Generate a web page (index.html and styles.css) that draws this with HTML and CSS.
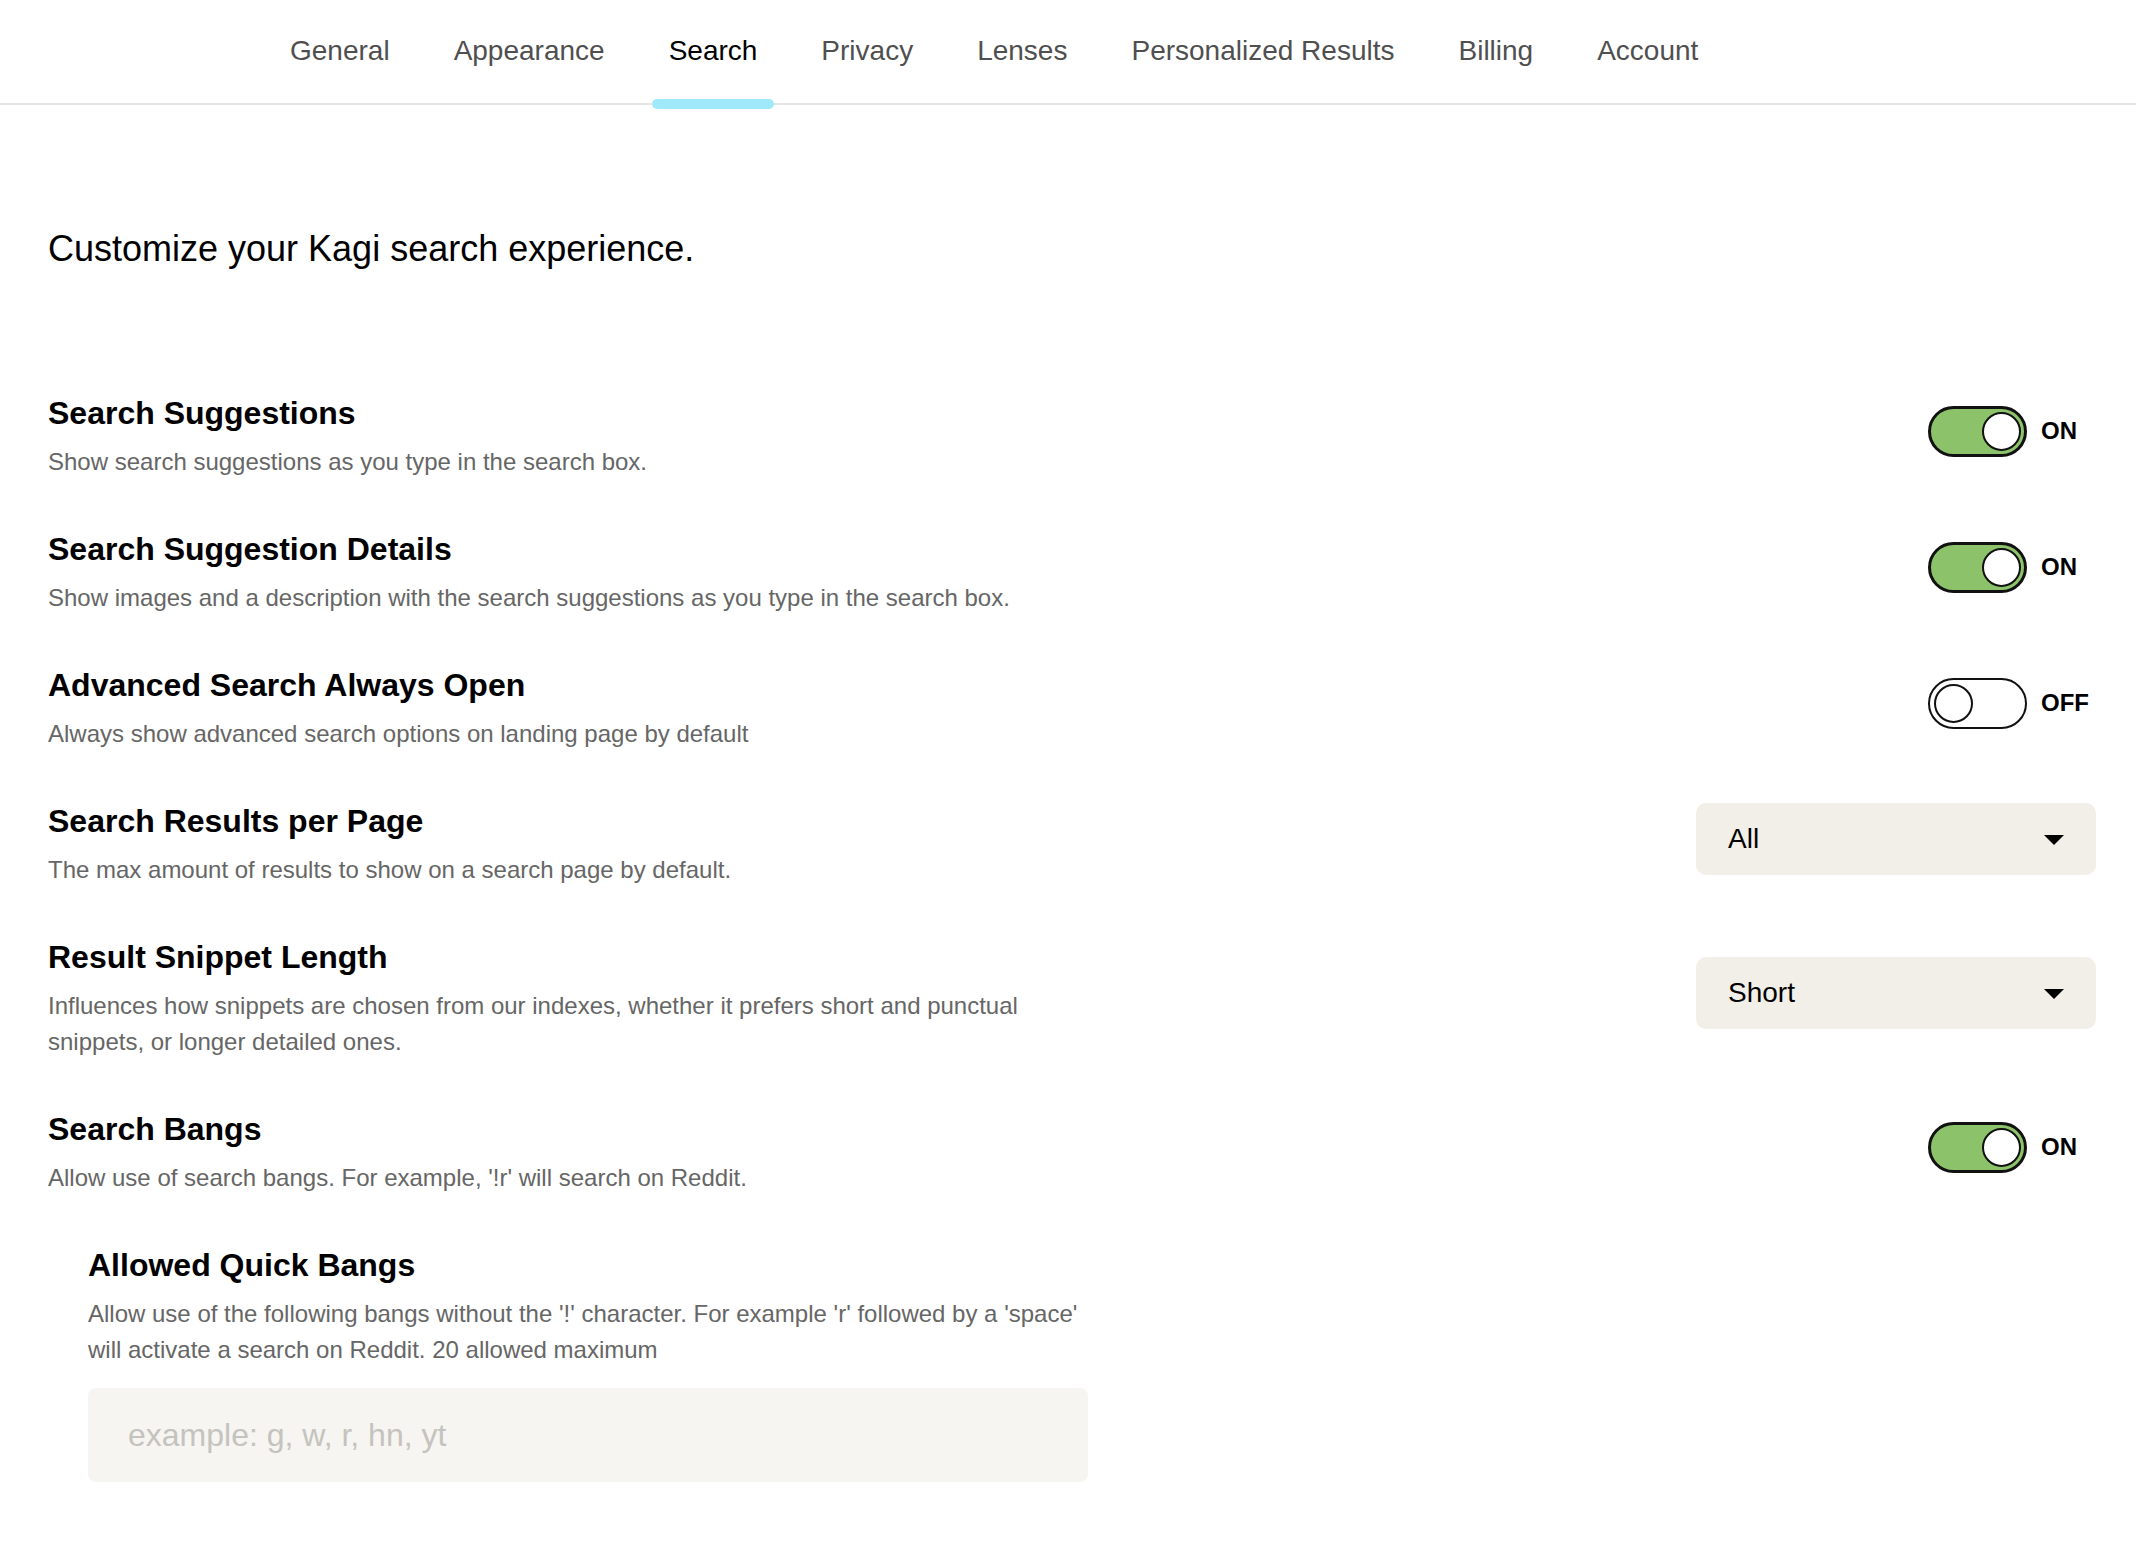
FILE: index.html
```html
<!DOCTYPE html>
<html lang="en">
<head>
<meta charset="utf-8">
<title>Search Settings</title>
<link rel="stylesheet" href="styles.css">
</head>
<body>
<nav class="tabs">
  <a class="tab">General</a>
  <a class="tab">Appearance</a>
  <a class="tab active">Search</a>
  <a class="tab">Privacy</a>
  <a class="tab">Lenses</a>
  <a class="tab">Personalized Results</a>
  <a class="tab">Billing</a>
  <a class="tab">Account</a>
</nav>
<main class="page">
  <h1 class="intro">Customize your Kagi search experience.</h1>

  <section class="setting">
    <div class="info">
      <h2 class="title">Search Suggestions</h2>
      <p class="desc">Show search suggestions as you type in the search box.</p>
    </div>
    <div class="control">
      <div class="switch-group">
        <span class="switch on"><span class="knob"></span></span>
        <span class="switch-label">ON</span>
      </div>
    </div>
  </section>

  <section class="setting">
    <div class="info">
      <h2 class="title">Search Suggestion Details</h2>
      <p class="desc">Show images and a description with the search suggestions as you type in the search box.</p>
    </div>
    <div class="control">
      <div class="switch-group">
        <span class="switch on"><span class="knob"></span></span>
        <span class="switch-label">ON</span>
      </div>
    </div>
  </section>

  <section class="setting">
    <div class="info">
      <h2 class="title">Advanced Search Always Open</h2>
      <p class="desc">Always show advanced search options on landing page by default</p>
    </div>
    <div class="control">
      <div class="switch-group">
        <span class="switch off"><span class="knob"></span></span>
        <span class="switch-label">OFF</span>
      </div>
    </div>
  </section>

  <section class="setting">
    <div class="info">
      <h2 class="title">Search Results per Page</h2>
      <p class="desc">The max amount of results to show on a search page by default.</p>
    </div>
    <div class="control">
      <div class="select">
        <span class="select-value">All</span>
        <span class="caret"></span>
      </div>
    </div>
  </section>

  <section class="setting">
    <div class="info">
      <h2 class="title">Result Snippet Length</h2>
      <p class="desc">Influences how snippets are chosen from our indexes, whether it prefers short and punctual snippets, or longer detailed ones.</p>
    </div>
    <div class="control">
      <div class="select">
        <span class="select-value">Short</span>
        <span class="caret"></span>
      </div>
    </div>
  </section>

  <section class="setting">
    <div class="info">
      <h2 class="title">Search Bangs</h2>
      <p class="desc">Allow use of search bangs. For example, '!r' will search on Reddit.</p>
    </div>
    <div class="control">
      <div class="switch-group">
        <span class="switch on"><span class="knob"></span></span>
        <span class="switch-label">ON</span>
      </div>
    </div>
  </section>

  <section class="subsetting">
    <h2 class="title">Allowed Quick Bangs</h2>
    <p class="desc">Allow use of the following bangs without the '!' character. For example 'r' followed by a 'space' will activate a search on Reddit. 20 allowed maximum</p>
    <input class="bang-input" type="text" placeholder="example: g, w, r, hn, yt">
  </section>
</main>
</body>
</html>
```

FILE: styles.css
```css
* {
  box-sizing: border-box;
}

html, body {
  margin: 0;
  padding: 0;
  background: #ffffff;
}

body {
  font-family: "Liberation Sans", Arial, Helvetica, sans-serif;
  color: #111111;
}

/* ---------- top tabs ---------- */
.tabs {
  display: flex;
  align-items: center;
  gap: 30px;
  height: 105px;
  padding-left: 273px;
  border-bottom: 2px solid #e6e6e6;
}

.tab {
  position: relative;
  display: flex;
  align-items: center;
  height: 103px;
  padding: 0 17px 2px;
  font-size: 28px;
  color: #4f4f4f;
  cursor: pointer;
  white-space: nowrap;
}

.tab.active {
  color: #000000;
}

.tab.active::after {
  content: "";
  position: absolute;
  left: 0;
  right: 0;
  bottom: -6px;
  height: 10px;
  border-radius: 5px;
  background: #a0e9fa;
}

/* ---------- page ---------- */
.page {
  padding: 122px 40px 0 48px;
}

.intro {
  margin: 0 0 122px;
  font-size: 36px;
  line-height: 44px;
  font-weight: 400;
  color: #000000;
}

.setting {
  display: flex;
  justify-content: space-between;
  align-items: center;
  margin-bottom: 49px;
}

.info {
  width: 1000px;
}

.title {
  margin: 0;
  font-size: 32px;
  line-height: 40px;
  font-weight: 700;
  color: #000000;
}

.desc {
  margin: 11px 0 0;
  font-size: 24px;
  line-height: 36px;
  color: #666666;
}

.control {
  width: 400px;
  display: flex;
  justify-content: flex-end;
  margin-bottom: 11px;
}

/* ---------- switches ---------- */
.switch-group {
  display: flex;
  align-items: center;
  gap: 14px;
}

.switch {
  display: flex;
  align-items: center;
  width: 99px;
  height: 51px;
  border-radius: 26px;
  border: 3px solid #111111;
}

.switch.on {
  justify-content: flex-end;
  padding-right: 3px;
  background: #8cc269;
}

.switch.off {
  justify-content: flex-start;
  padding-left: 4px;
  border-width: 2px;
  background: #ffffff;
}

.knob {
  width: 39px;
  height: 39px;
  border-radius: 50%;
  border: 2.5px solid #111111;
  background: #ffffff;
}

.switch-label {
  width: 55px;
  font-size: 24px;
  font-weight: 700;
  color: #000000;
}

/* ---------- selects ---------- */
.select {
  display: flex;
  justify-content: space-between;
  align-items: center;
  width: 400px;
  height: 72px;
  padding: 0 32px;
  border-radius: 10px;
  background: #f2efe8;
}

.select-value {
  font-size: 28px;
  color: #000000;
}

.caret {
  width: 0;
  height: 0;
  margin-top: 2px;
  border-left: 10px solid transparent;
  border-right: 10px solid transparent;
  border-top: 10px solid #000000;
}

/* ---------- sub setting ---------- */
.subsetting {
  width: 1000px;
  margin-left: 40px;
}

.bang-input {
  display: block;
  width: 1000px;
  height: 94px;
  margin-top: 20px;
  padding: 0 40px;
  border: none;
  border-radius: 8px;
  background: #f6f5f1;
  font-family: "Liberation Sans", Arial, Helvetica, sans-serif;
  font-size: 32px;
  color: #111111;
  outline: none;
}

.bang-input::placeholder {
  color: #c5c3be;
}
```
